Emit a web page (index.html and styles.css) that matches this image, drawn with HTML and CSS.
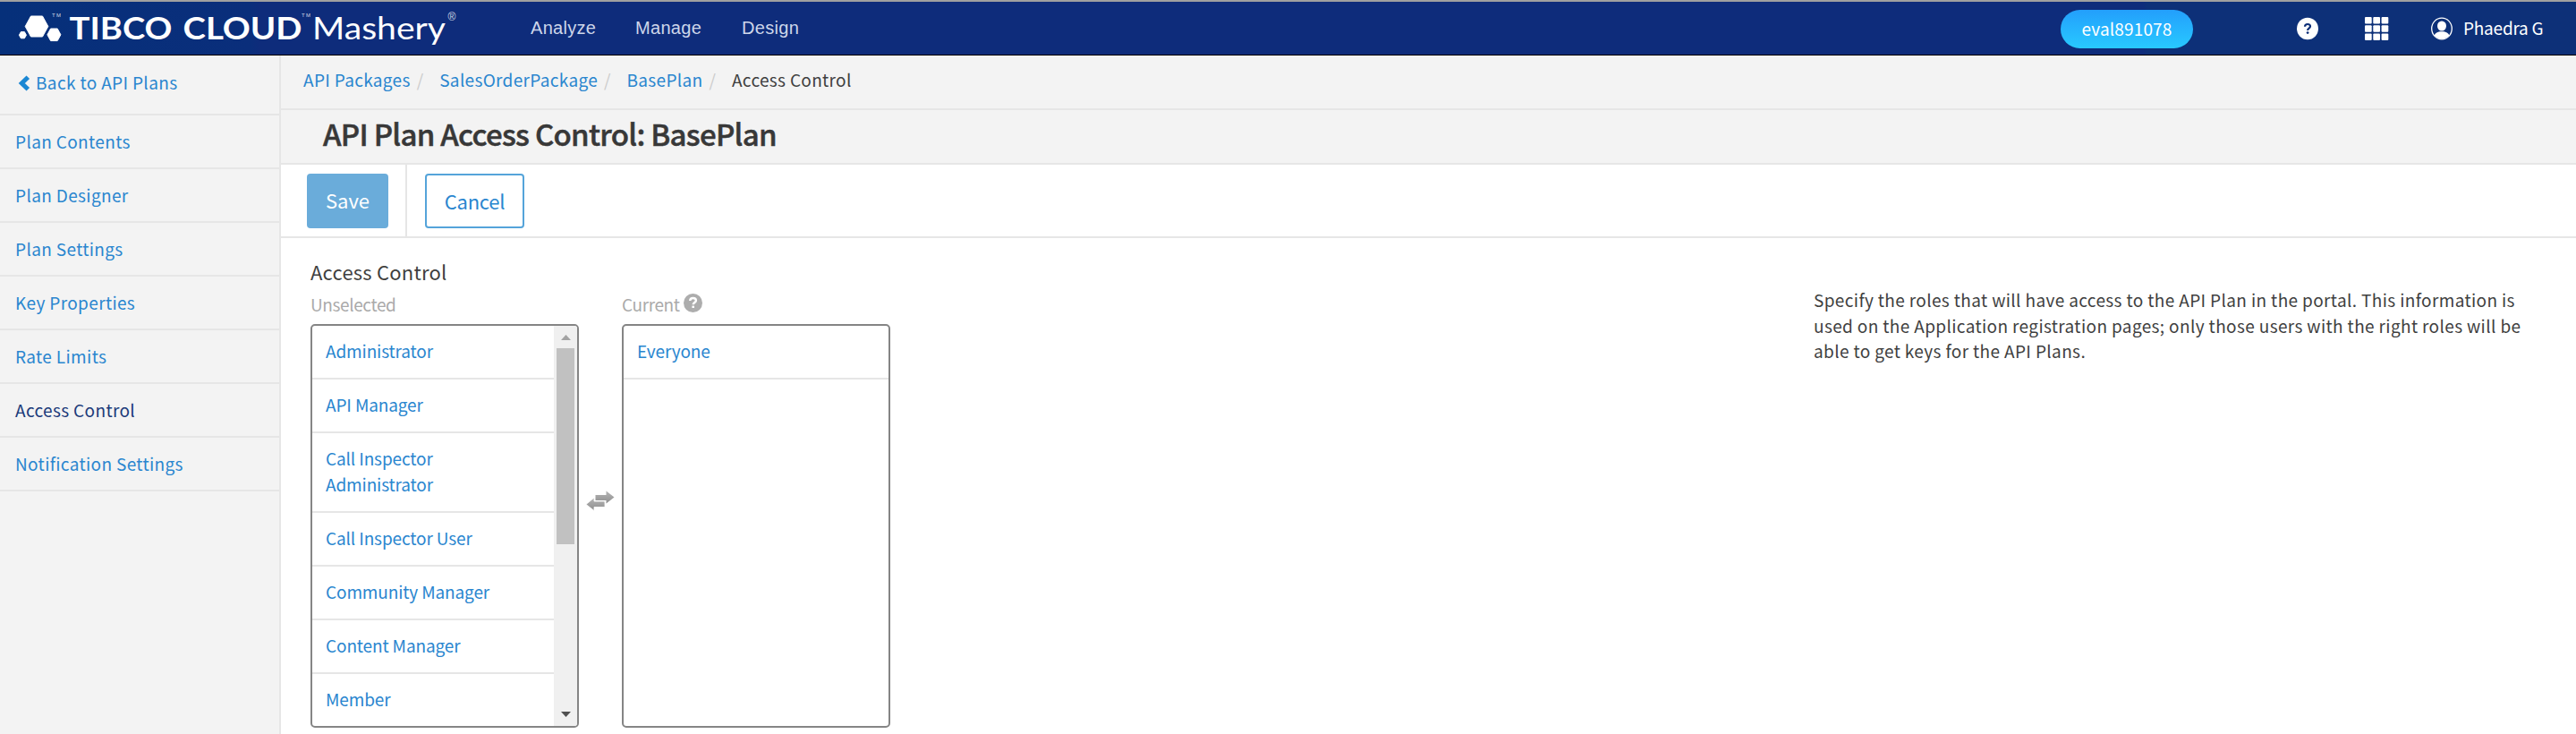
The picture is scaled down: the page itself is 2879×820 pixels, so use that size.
FILE: index.html
```
<!DOCTYPE html>
<html lang="en">
<head>
<meta charset="utf-8">
<title>API Plan Access Control</title>
<link rel="stylesheet" href="styles.css">
</head>
<body>
<header class="topbar">
  <svg class="logo" width="520" height="59" viewBox="0 2 520 59" role="img" aria-label="TIBCO Cloud Mashery">
    <g fill="#fff">
      <path d="M34.5 18h13l6.3 11.5-6.3 11.5h-13L28.2 29.5z" stroke="#fff" stroke-width="1" stroke-linejoin="round"/>
      <path d="M56.6 32h7.6l3.7 6.8-3.7 6.8h-7.6l-3.7-6.8z" stroke="#fff" stroke-width="1" stroke-linejoin="round"/>
      <path d="M23.4 35.6h4l2 3.6-2 3.6h-4l-2-3.6z" stroke="#fff" stroke-width="1" stroke-linejoin="round"/>
      <text class="logo-bold" x="77.5" y="44.3" textLength="115" lengthAdjust="spacingAndGlyphs">TIBCO</text>
      <text class="logo-bold" x="204.5" y="44.3" textLength="133" lengthAdjust="spacingAndGlyphs">CLOUD</text>
      <text class="logo-light" x="349" y="44.3" textLength="149" lengthAdjust="spacingAndGlyphs">Mashery</text>
      <text class="logo-mark" x="58" y="18.500" textLength="10">TM</text>
      <text class="logo-mark" x="337" y="18.500" textLength="10">TM</text>
      <text class="logo-reg" x="500.5" y="22.500">®</text>
    </g>
  </svg>
  <nav class="mainnav">
    <a class="nav-analyze">Analyze</a><a class="nav-manage">Manage</a><a>Design</a>
  </nav>
  <div class="tools">
    <span class="pill">eval891078</span>
    <svg class="help" width="24" height="26" viewBox="0 0 24 26"><ellipse cx="12" cy="13" rx="12" ry="12.2" fill="#fff"/><path d="M9 10.700c.1-1.700 1.300-2.700 3-2.700 1.800 0 3 .9 3 2.500 0 2.200-2.900 2.200-2.900 4.500" fill="none" stroke="#0e2f78" stroke-width="2.200"/><circle cx="12.100" cy="17.600" r="1.400" fill="#0e2f78"/></svg>
    <svg class="grid" width="27" height="26" viewBox="0 0 27 26" fill="#fff"><rect width="7.700" height="7.500" rx="1"/><rect x="9.300" width="7.700" height="7.500" rx="1"/><rect x="18.600" width="7.700" height="7.500" rx="1"/><rect y="9.200" width="7.700" height="7.500" rx="1"/><rect x="9.300" y="9.200" width="7.700" height="7.500" rx="1"/><rect x="18.600" y="9.200" width="7.700" height="7.500" rx="1"/><rect y="18.400" width="7.700" height="7.500" rx="1"/><rect x="9.300" y="18.400" width="7.700" height="7.500" rx="1"/><rect x="18.600" y="18.400" width="7.700" height="7.500" rx="1"/></svg>
    <svg class="avatar" width="24" height="26" viewBox="0 0 24 26"><ellipse cx="12" cy="13" rx="11.3" ry="11.8" fill="none" stroke="#fff" stroke-width="1.3"/><ellipse cx="12" cy="10" rx="5" ry="5.6" fill="#fff"/><path d="M3.6 20.5c1-2.700 4-3.700 6-4.200h4.800c2 .5 5 1.500 6 4.200-4.500 5.400-12.300 5.400-16.800 0z" fill="#fff"/></svg>
    <span class="user">Phaedra G</span>
  </div>
</header>
<div class="layout">
  <aside class="sidebar">
    <a class="back"><svg width="14" height="18" viewBox="0 0 14 18"><path d="M11.300 2.200 4.300 9l7 6.800" fill="none" stroke="#1b87d3" stroke-width="5"/></svg>Back to API Plans</a>
    <a>Plan Contents</a>
    <a>Plan Designer</a>
    <a>Plan Settings</a>
    <a>Key Properties</a>
    <a>Rate Limits</a>
    <a class="active">Access Control</a>
    <a>Notification Settings</a>
  </aside>
  <main class="main">
    <div class="crumbs"><a>API Packages</a><i>/</i><a>SalesOrderPackage</a><i>/</i><a>BasePlan</a><i>/</i><span>Access Control</span></div>
    <h1 class="title">API Plan Access Control: BasePlan</h1>
    <div class="toolbar">
      <div class="save-cell"><button class="btn save">Save</button></div>
      <button class="btn cancel">Cancel</button>
    </div>
    <div class="content">
      <section class="picker">
        <h2 class="label">Access Control</h2>
        <div class="columns">
          <div class="column">
            <div class="caption">Unselected</div>
            <div class="box">
              <ul class="list">
                <li>Administrator</li>
                <li>API Manager</li>
                <li>Call Inspector<br>Administrator</li>
                <li>Call Inspector User</li>
                <li>Community Manager</li>
                <li>Content Manager</li>
                <li>Member</li>
              </ul>
              <div class="scrollbar">
                <svg width="11" height="6" viewBox="0 0 11 6"><path d="M0 6 5.500 0 11 6z" fill="#a3a3a3"/></svg>
                <div class="thumb"></div>
                <svg class="down" width="11" height="6" viewBox="0 0 11 6"><path d="M0 0h11L5.500 6z" fill="#505050"/></svg>
              </div>
            </div>
          </div>
          <svg class="swap" width="32" height="23" viewBox="0 0 32 23">
            <defs><linearGradient id="g" x1="0" y1="0" x2="0" y2="1"><stop offset="0" stop-color="#b5b5b5"/><stop offset="1" stop-color="#8f8f8f"/></linearGradient></defs>
            <path d="M10.500 5h12V.5L31.500 7.500l-9 7V11h-12z" fill="url(#g)"/>
            <path d="M21 12H9V8L0 15.500l9 7V18.500h12z" fill="url(#g)" stroke="#fff" stroke-width=".8"/>
          </svg>
          <div class="column">
            <div class="caption">Current<svg width="21" height="21" viewBox="0 0 21 21"><circle cx="10.500" cy="10.500" r="10.500" fill="#adadad"/><path d="M7.200 8c.1-2 1.500-3 3.400-3 2 0 3.300 1 3.300 2.700 0 2.300-3.200 2.300-3.200 4.600" fill="none" stroke="#fff" stroke-width="2.400"/><rect x="9.400" y="13.600" width="2.600" height="2.400" fill="#fff"/></svg></div>
            <div class="box"><ul class="list"><li>Everyone</li></ul></div>
          </div>
        </div>
      </section>
      <p class="hint">Specify the roles that will have access to the API Plan in the portal. This information is<br>used on the Application registration pages; only those users with the right roles will be<br>able to get keys for the API Plans.</p>
    </div>
  </main>
</div>
</body>
</html>
```
FILE: styles.css
```
* { box-sizing: border-box; }
body {
  margin: 0;
  height: 820px;
  overflow: hidden;
  display: flex;
  flex-direction: column;
  background: #fff;
  color: #3f3f3f;
  font: 19px/29px "Noto Sans CJK SC", "Noto Sans", sans-serif;
}
.topbar {
  flex: none;
  height: 62px;
  display: flex;
  align-items: flex-start;
  border-top: 2px solid #a0a0a0;
  border-bottom: 1px solid #000;
  background: linear-gradient(90deg, #06307a 0, #0a2e7b 280px, #0e2c7b 290px, #0e2c7b 2395px, #0d3078 2400px);
}
.logo { display: block; flex: none; }
.logo-bold { font: 700 34.5px Lato, sans-serif; }
.logo-light { font: 400 35px Lato, sans-serif; }
.logo-mark { font: 6px "Liberation Sans", sans-serif; opacity: .8; }
.logo-reg { font: 12px "Liberation Sans", sans-serif; opacity: .8; }
.mainnav {
  display: flex;
  padding-left: 73px;
  font: 20px/59px "Liberation Sans", Arial, sans-serif;
  letter-spacing: .3px;
  color: #cdd6ea;
}
.nav-analyze { width: 117px; }
.nav-manage { width: 119px; }
.tools { margin-left: auto; display: flex; align-items: flex-start; color: #fff; }
.pill {
  width: 148px;
  height: 43px;
  margin: 9px 116px 0 0;
  border-radius: 22px;
  background: linear-gradient(#239ffc, #28c9ff);
  text-align: center;
  line-height: 41px;
  letter-spacing: .15px;
}
.help { margin: 17px 52px 0 0; }
.grid { margin: 17px 47px 0 0; }
.avatar { margin: 17px 12px 0 0; }
.user { width: 126px; line-height: 57px; letter-spacing: -.22px; }
.layout { flex: 1; display: flex; min-height: 0; }
.sidebar {
  flex: none;
  width: 314px;
  background: #f3f3f3;
  border-right: 2px solid #e6e6e6;
  letter-spacing: .36px;
  color: #2a86cf;
}
.sidebar a { display: block; height: 60px; padding-left: 17px; line-height: 58px; border-bottom: 2px solid #e6e6e6; }
.sidebar .back { height: 67px; display: flex; align-items: flex-start; padding-left: 20px; line-height: 60px; }
.back svg { margin: 22px 6px 0 0; }
.sidebar .active { color: #1b3a7a; }
.main { flex: 1; min-width: 0; }
.crumbs {
  height: 61px;
  padding-left: 25px;
  background: #f3f3f3;
  border-bottom: 2px solid #e6e6e6;
  line-height: 53px;
  letter-spacing: .33px;
  white-space: nowrap;
}
.crumbs a { color: #2a86cf; }
.crumbs i { display: inline-block; width: 32.5px; padding-left: 7px; font-style: normal; color: #ccc; }
.title {
  margin: 0;
  height: 61px;
  padding-left: 47px;
  background: #f3f3f3;
  border-bottom: 2px solid #e6e6e6;
  font-size: 33px;
  font-weight: 500;
  line-height: 53px;
  letter-spacing: -.72px;
  color: #383838;
  -webkit-text-stroke: .5px #383838;
}
.toolbar { height: 82px; display: flex; align-items: center; border-bottom: 2px solid #e6e6e6; }
.save-cell { width: 141px; height: 80px; display: flex; align-items: center; padding-left: 29px; border-right: 2px solid #e6e6e6; }
.btn { height: 61px; padding: 0 0 2px; border-radius: 4px; font: 22px/57px "Noto Sans CJK SC", "Noto Sans", sans-serif; }
.save { width: 91px; border: 0; background: #6aacda; color: #fff; }
.cancel { width: 111px; margin-left: 20px; border: 2px solid #55a4da; background: #fff; color: #2a86cf; letter-spacing: -.24px; }
.content { display: flex; align-items: flex-start; justify-content: space-between; padding: 0 0 0 33px; }
.label { margin: 20px 0 2px; font-size: 22px; font-weight: 400; line-height: 34px; letter-spacing: .22px; }
.columns { display: flex; }
.column { width: 300px; }
.caption { display: flex; height: 40px; line-height: 36px; letter-spacing: -.38px; color: #aaa; }
.caption svg { margin: 6px 0 0 4px; }
.box { display: flex; height: 451px; border: 2px solid #858585; border-radius: 5px; overflow: hidden; }
.list { flex: 1; margin: 0; padding: 0; list-style: none; letter-spacing: -.13px; color: #2a86cf; }
.list li { padding: 13px 0 16px 15px; border-bottom: 2px solid #e6e6e6; }
.list li:last-child:not(:first-child) { border-bottom: 0; }
.scrollbar { width: 26px; display: flex; flex-direction: column; align-items: center; padding: 10px 0; background: #f0f0f0; }
.scrollbar svg { flex: none; }
.thumb { width: 20px; height: 219px; margin-top: 9px; background: #c1c1c1; }
.down { margin-top: auto; }
.swap { margin: 226px 8px 0 8px; }
.hint { width: 852px; margin: 55px 0 0; letter-spacing: .37px; line-height: 28.700px; white-space: nowrap; }
```
